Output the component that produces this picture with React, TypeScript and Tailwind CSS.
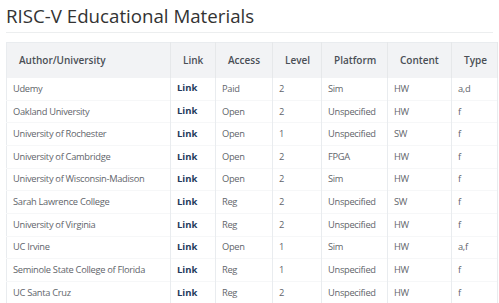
const rows = [
  ['Udemy', 'Paid', '2', 'Sim', 'HW', 'a,d'],
  ['Oakland University', 'Open', '2', 'Unspecified', 'HW', 'f'],
  ['University of Rochester', 'Open', '1', 'Unspecified', 'SW', 'f'],
  ['University of Cambridge', 'Open', '2', 'FPGA', 'HW', 'f'],
  ['University of Wisconsin-Madison', 'Open', '2', 'Sim', 'HW', 'f'],
  ['Sarah Lawrence College', 'Reg', '2', 'Unspecified', 'SW', 'f'],
  ['University of Virginia', 'Reg', '2', 'Unspecified', 'HW', 'f'],
  ['UC Irvine', 'Open', '1', 'Sim', 'HW', 'a,f'],
  ['Seminole State College of Florida', 'Reg', '1', 'Unspecified', 'HW', 'f'],
  ['UC Santa Cruz', 'Reg', '2', 'Unspecified', 'HW', 'f'],
];

const headers = ['Author/University', 'Link', 'Access', 'Level', 'Platform', 'Content', 'Type'];
const widths = ['w-[164px]', 'w-[45px]', 'w-[57px]', 'w-[49px]', 'w-[66px]', 'w-[64px]', 'w-[46px]'];

export default function App() {
  return (
    <div className="h-screen overflow-hidden bg-white px-[6px] pt-[3px] font-['Open_Sans',sans-serif]">
      <h1 className="text-[18.7px] font-medium leading-[26px] text-[#333]">RISC-V Educational Materials</h1>
      <div className="mt-[3px] border-b border-[#eceeef]" />
      <table className="mt-[9px] w-[491px] table-fixed border-collapse border border-[#e9ecef] text-[9.3px] tracking-[-0.3px]">
        <thead>
          <tr className="h-[35px] bg-[#f2f3f5]">
            {headers.map((h, i) => (
              <th
                key={h}
                className={`${widths[i]} border-r border-[#e6e8ea] pl-[12px] text-left text-[10px] font-semibold tracking-normal text-[#4a4f55]`}
              >
                {h}
              </th>
            ))}
          </tr>
        </thead>
        <tbody>
          {rows.map((r) => (
            <tr key={r[0]} className="h-[22.67px] border-b border-[#f6f7f8] text-[#5f656b]">
              <td className="border-r border-[#e9ecef] pl-[6px] whitespace-nowrap">{r[0]}</td>
              <td className="border-r border-[#e9ecef] pl-[6px] text-[9.5px] font-bold tracking-normal text-[#1f3b5c]">Link</td>
              <td className="border-r border-[#e9ecef] pl-[6px]">{r[1]}</td>
              <td className="border-r border-[#e9ecef] pl-[6px]">{r[2]}</td>
              <td className="border-r border-[#e9ecef] pl-[6px]">{r[3]}</td>
              <td className="border-r border-[#e9ecef] pl-[6px]">{r[4]}</td>
              <td className="border-r border-[#e9ecef] pl-[6px]">{r[5]}</td>
            </tr>
          ))}
        </tbody>
      </table>
    </div>
  );
}
